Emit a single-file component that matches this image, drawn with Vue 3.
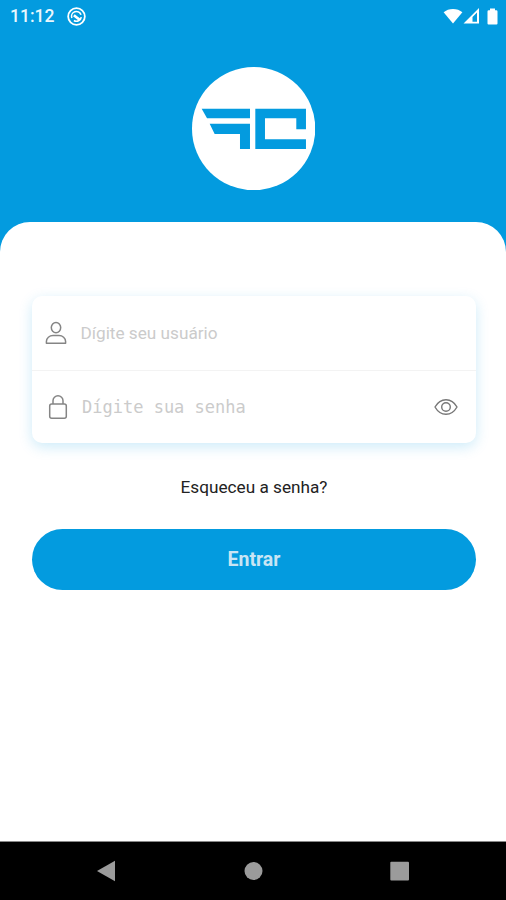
<script setup>
import { ref } from 'vue'

const time = ref('11:12')
</script>

<template>
  <div class="screen">
    <header class="hero">
      <div class="status">
        <span class="time">{{ time }}</span>
        <svg class="notice" viewBox="0 0 18 18" fill="none" stroke="#fff">
          <circle cx="9" cy="9" r="7.900" stroke-width="1.700" />
          <path d="M4.600 10.500a4.600 4.600 0 0 1 8.700-3.200M13.500 9.500a4.600 4.600 0 0 1-7 3.300" stroke-width="1.500" />
          <path d="M6.500 7.800 12.300 12.300" stroke-width="2.600" />
        </svg>
        <div class="signals">
          <svg class="wifi" viewBox="0 0 20 16" fill="#fff"><path d="M10 15.500 .6 4.300C5.400-.2 14.600-.2 19.400 4.300Z" /></svg>
          <svg class="cell" viewBox="0 0 17 16" fill="#fff"><path fill-rule="evenodd" d="M.5 15.500 16 0V15.500ZM9.500 9V13.800H14V4.500Z" /></svg>
          <svg class="battery" viewBox="0 0 11 17" fill="#fff"><path d="M3 .5h5v1.800h1.300q1.200 0 1.200 1.200v12q0 1-1 1h-8q-1 0-1-1v-12q0-1.200 1.200-1.200H3Z" /></svg>
        </div>
      </div>
      <svg class="logo" viewBox="23 20 370 370">
        <circle cx="208" cy="205" r="185" fill="#fff" />
        <g fill="#039bdf">
          <path d="M52 145H197V174H68Z" />
          <path d="M76 190H197V266H167V221H91Z" />
          <path d="M213 145H365V207H336V174H242V237H365V266H213Z" />
        </g>
      </svg>
    </header>

    <main class="sheet">
      <div class="card">
        <div class="field">
          <svg class="user" viewBox="0 0 22 24" fill="none" stroke="#858585" stroke-width="1.500">
            <ellipse cx="11" cy="6.600" rx="4.700" ry="5.200" />
            <path d="M1.400 22.200V20.500C1.400 16.900 4.500 14.600 8 14.600H14C17.500 14.600 20.600 16.900 20.600 20.500V22.200Z" stroke-linejoin="round" />
          </svg>
          <span class="hint">Dígite seu usuário</span>
        </div>
        <div class="field secret">
          <svg class="lock" viewBox="0 0 20 26" fill="none" stroke="#858585" stroke-width="1.500">
            <rect x="1.700" y="10" width="16.600" height="14.300" rx="2" />
            <path d="M5 10V6.800a5 5 0 0 1 10 0V10" />
          </svg>
          <span class="hint mono">Dígite sua senha</span>
          <svg class="eye" viewBox="0 0 24 18" fill="none" stroke="#777" stroke-width="1.400">
            <path d="M1 9C6.500-.7 17.500-.7 23 9C17.500 18.700 6.500 18.700 1 9Z" stroke-linejoin="round" />
            <circle cx="12" cy="9" r="4.300" />
          </svg>
        </div>
      </div>
      <a class="forgot">Esqueceu a senha?</a>
      <button class="submit" type="button">Entrar</button>
    </main>

    <nav class="navbar">
      <svg viewBox="0 0 20 22" fill="#9b9b9b"><path d="M1 11 19 .7V21.300Z" /></svg>
      <svg viewBox="0 0 20 22" fill="#9b9b9b"><circle cx="10.500" cy="11" r="9" /></svg>
      <svg viewBox="0 0 20 22" fill="#9b9b9b"><rect x=".3" y="1.700" width="18.700" height="18.700" rx="1" /></svg>
    </nav>
  </div>
</template>

<style>
body {
  margin: 0;
}
</style>

<style scoped>
.screen {
  display: flex;
  flex-direction: column;
  width: 506px;
  height: 900px;
  overflow: hidden;
  background: #039bdf;
  font-family: Roboto, "Liberation Sans", sans-serif;
}

.hero {
  display: flex;
  flex-direction: column;
  align-items: center;
  height: 222px;
  flex: none;
}

.status {
  display: flex;
  align-items: center;
  box-sizing: border-box;
  width: 100%;
  height: 32px;
  padding: 0 8.500px 0 10px;
  color: #e9f7fd;
}

.time {
  width: 56.500px;
  font-size: 17.500px;
  font-weight: 500;
  line-height: 32px;
  white-space: nowrap;
}

.notice {
  width: 19px;
  height: 19px;
}

.signals {
  display: flex;
  align-items: center;
  margin-left: auto;
}

.wifi {
  width: 20px;
  height: 16px;
}

.cell {
  width: 17px;
  height: 16px;
}

.battery {
  width: 11px;
  height: 17px;
  margin-left: 7px;
}

.logo {
  width: 123.300px;
  height: 123.300px;
  margin-top: 35px;
  margin-left: 1.400px;
}

.sheet {
  display: flex;
  flex-direction: column;
  align-items: center;
  flex: 1;
  box-sizing: border-box;
  padding: 74px 30px 0 32px;
  border-radius: 30px 30px 0 0;
  background: #fff;
}

.card {
  width: 100%;
  height: 147px;
  border-radius: 10px;
  background: #fff;
  box-shadow: 0 4px 14px rgba(3, 155, 223, 0.2);
}

.field {
  display: flex;
  align-items: center;
  box-sizing: border-box;
  height: 74px;
  padding: 0 18px 0 13px;
}

.secret {
  height: 73px;
  padding-left: 16px;
  border-top: 1px solid #f3f3f3;
}

.user {
  width: 22px;
  height: 24px;
  margin-right: 13.500px;
}

.lock {
  width: 20px;
  height: 26px;
  margin-right: 14px;
}

.eye {
  width: 24px;
  height: 18px;
  margin-left: auto;
}

.hint {
  color: #cbcbcb;
  font-size: 17.200px;
  line-height: 20px;
  white-space: nowrap;
}

.mono {
  font-family: "DejaVu Sans Mono", "Liberation Mono", monospace;
  font-size: 17px;
}

.forgot {
  margin-top: 32px;
  color: #222;
  font-size: 17.200px;
  line-height: 24px;
}

.submit {
  width: 100%;
  height: 61px;
  margin-top: 29.500px;
  padding: 0;
  border: 0;
  border-radius: 31px;
  background: #039bdf;
  color: #c8e5f4;
  font: 700 19.500px/61px Roboto, "Liberation Sans", sans-serif;
}

.navbar {
  display: flex;
  align-items: center;
  justify-content: space-between;
  box-sizing: border-box;
  flex: none;
  height: 59px;
  padding: 0 96px;
  border-top: 1px solid #888;
  background: #000;
}

.navbar svg {
  width: 20px;
  height: 22px;
}
</style>
